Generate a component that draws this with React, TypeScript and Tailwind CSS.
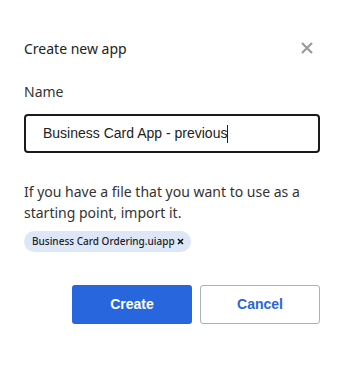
export default function App() {
  return (
    <div className="w-[342px] h-[387px] bg-white pl-6 pr-[22px] pt-[38px] font-['Noto_Sans',sans-serif] text-[#222]">
      <div className="flex items-center justify-between h-5">
        <h1 className="text-[14px] text-[#222]">Create new app</h1>
        <button className="mr-[7px] text-[#9a9a9a]" aria-label="Close">
          <svg width="12" height="12" viewBox="0 0 12 12" stroke="currentColor" strokeWidth="2.2">
            <path d="M1 1L11 11M11 1L1 11" />
          </svg>
        </button>
      </div>

      <label className="block mt-[24px] text-[14px] text-[#333] leading-5">Name</label>

      <div className="mt-[12px] h-[39px] w-[296px] rounded-[4px] border-2 border-[#1a1a1a] flex items-center pl-[17px] font-['Liberation_Sans',sans-serif] text-[14px] text-[#222]">
        Business Card App - previous
        <span className="inline-block w-px h-[18px] bg-[#222]" />
      </div>

      <p className="mt-[28px] text-[14px] leading-[21px] text-[#333]">
        If you have a file that you want to use as a starting point, import it.
      </p>

      <div className="mt-[8px] inline-flex items-center h-[21px] rounded-full bg-[#dde7f8] pl-[8px] pr-[7px] text-[10px] text-[#222] font-medium">
        Business Card Ordering.uiapp
        <svg className="ml-[2px]" width="7" height="7" viewBox="0 0 7 7" stroke="#111" strokeWidth="1.6">
          <path d="M1 1L6 6M6 1L1 6" />
        </svg>
      </div>

      <div className="mt-[33px] flex justify-end gap-[8px] font-['Liberation_Sans',sans-serif] text-[14px] font-bold">
        <button className="w-[120px] h-[39px] rounded-[3px] bg-[#2866dd] text-white">Create</button>
        <button className="w-[120px] h-[39px] rounded-[3px] border border-[#a9b1ba] bg-white text-[#2866dd]">
          Cancel
        </button>
      </div>
    </div>
  );
}
